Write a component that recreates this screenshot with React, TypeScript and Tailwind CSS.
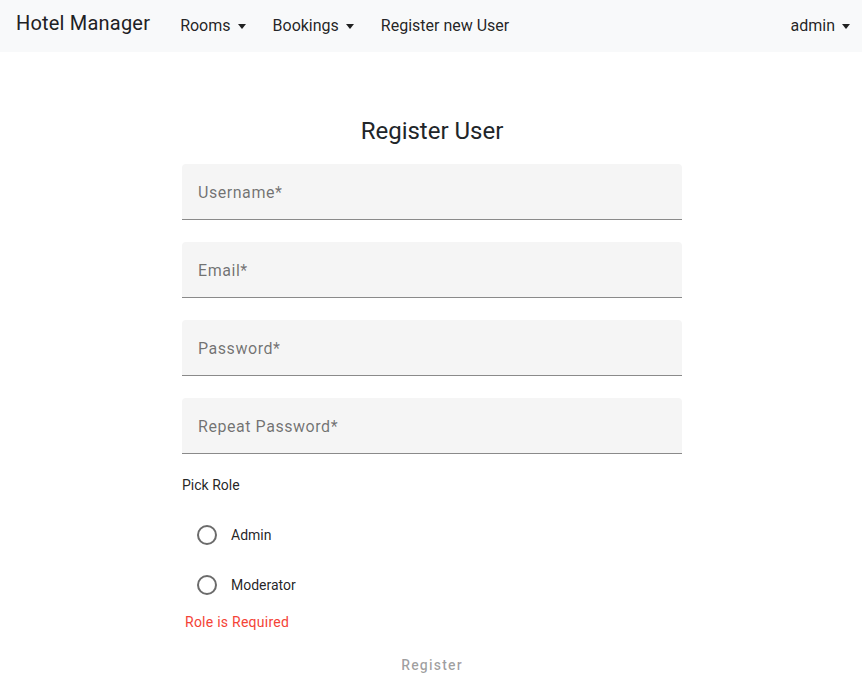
import React from 'react';

const fields = ['Username*', 'Email*', 'Password*', 'Repeat Password*'];
const roles = ['Admin', 'Moderator'];

function Caret() {
  return <span className="ml-[7px] inline-block border-x-[4.5px] border-t-[5px] border-x-transparent border-t-current align-middle" />;
}

export default function App() {
  return (
    <div className="min-h-screen bg-white text-[#212529]" style={{ fontFamily: 'Roboto, "Helvetica Neue", sans-serif' }}>
      {/* Navbar */}
      <nav className="flex h-[52px] items-center bg-[#f8f9fa] pl-4 pr-3">
        <span className="mr-[30px] pb-[6px] text-[20px] leading-[30px] tracking-[0.2px] text-[#1e2124]">Hotel Manager</span>
        <div className="flex items-center gap-[27px] text-[16px] text-[rgba(0,0,0,0.87)]">
          <span className="flex items-center">Rooms<Caret /></span>
          <span className="flex items-center">Bookings<Caret /></span>
          <span>Register new User</span>
        </div>
        <span className="ml-auto flex items-center text-[16px] text-[rgba(0,0,0,0.87)]">admin<Caret /></span>
      </nav>

      {/* Form */}
      <div className="mx-auto w-[502px] pl-[2px]">
        <h1 className="mt-[63px] text-center text-[24px] leading-[32px] text-[#212529]">Register User</h1>
        <div className="mt-[17px] flex flex-col gap-[22px]">
          {fields.map((f) => (
            <div key={f} className="flex h-[56px] items-center rounded-t-[4px] border-b border-[#8a8a8a] bg-[#f5f5f5] px-4">
              <span className="pt-[2px] text-[16px] tracking-[0.55px] text-[rgba(0,0,0,0.55)]">{f}</span>
            </div>
          ))}
        </div>
        <div className="mt-[21px] text-[14px] leading-[20px] text-[rgba(0,0,0,0.87)]">Pick Role</div>
        <div className="mt-[15px] flex flex-col">
          {roles.map((r) => (
            <div key={r} className="flex h-[50px] items-center pl-[15px]">
              <span className="h-[20px] w-[20px] rounded-full border-2 border-[#6b6b6b]" />
              <span className="ml-[14px] text-[14px] text-[rgba(0,0,0,0.87)]">{r}</span>
            </div>
          ))}
        </div>
        <div className="mt-[2px] pl-[3px] text-[14px] leading-[20px] tracking-[0.25px] text-[#f44336]">Role is Required</div>
        <div className="mt-[23px] text-center text-[14px] font-medium tracking-[1.2px] text-[rgba(0,0,0,0.38)]">Register</div>
      </div>
    </div>
  );
}
